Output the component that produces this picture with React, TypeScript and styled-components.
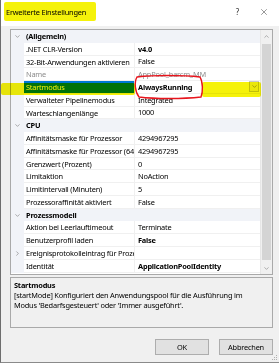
import React from 'react';
import styled, { createGlobalStyle } from 'styled-components';
import { ChevronDown, ChevronRight, ChevronUp, X } from 'lucide-react';

const GlobalStyle = createGlobalStyle`
  html, body {
    margin: 0;
    padding: 0;
    background: #ffffff;
  }
  body {
    font-family: "Noto Sans", "Liberation Sans", sans-serif;
    font-size: 7.4px;
    letter-spacing: -0.2px;
    color: #000;
  }
`;

type Row =
  | { kind: 'cat'; label: string }
  | {
      kind: 'prop';
      name: string;
      value: string;
      bold?: boolean;
      disabled?: boolean;
      selected?: boolean;
      expandable?: boolean;
    };

const rows: Row[] = [
  { kind: 'cat', label: '(Allgemein)' },
  { kind: 'prop', name: '.NET CLR-Version', value: 'v4.0', bold: true },
  { kind: 'prop', name: '32-Bit-Anwendungen aktivieren', value: 'False' },
  { kind: 'prop', name: 'Name', value: 'AppPool_barcm_MM', disabled: true },
  { kind: 'prop', name: 'Startmodus', value: 'AlwaysRunning', bold: true, selected: true },
  { kind: 'prop', name: 'Verwalteter Pipelinemodus', value: 'Integrated' },
  { kind: 'prop', name: 'Warteschlangenlänge', value: '1000' },
  { kind: 'cat', label: 'CPU' },
  { kind: 'prop', name: 'Affinitätsmaske für Prozessor', value: '4294967295' },
  { kind: 'prop', name: 'Affinitätsmaske für Prozessor (64-Bit-Option)', value: '4294967295' },
  { kind: 'prop', name: 'Grenzwert (Prozent)', value: '0' },
  { kind: 'prop', name: 'Limitaktion', value: 'NoAction' },
  { kind: 'prop', name: 'Limitintervall (Minuten)', value: '5' },
  { kind: 'prop', name: 'Prozessoraffinität aktiviert', value: 'False' },
  { kind: 'cat', label: 'Prozessmodell' },
  { kind: 'prop', name: 'Aktion bei Leerlauftimeout', value: 'Terminate' },
  { kind: 'prop', name: 'Benutzerprofil laden', value: 'False', bold: true },
  { kind: 'prop', name: 'Ereignisprotokolleintrag für Prozessmodell', value: '', expandable: true },
  { kind: 'prop', name: 'Identität', value: 'ApplicationPoolIdentity', bold: true },
];

const App: React.FC = () => {
  return (
    <>
      <GlobalStyle />
      <Window>
        <TitleBar>
          <Title>Erweiterte Einstellungen</Title>
          <TitleButtons>
            <TitleGlyph>?</TitleGlyph>
            <X size={10} strokeWidth={1.2} />
          </TitleButtons>
        </TitleBar>

        <Body>
          <Grid>
            <List>
              {rows.map((r, i) =>
                r.kind === 'cat' ? (
                  <CatRow key={i}>
                    <Gutter>
                      <ChevronDown size={7} strokeWidth={1.6} color="#555" />
                    </Gutter>
                    <CatLabel>{r.label}</CatLabel>
                  </CatRow>
                ) : (
                  <PropRow key={i}>
                    <Gutter>
                      {r.expandable && <ChevronRight size={7} strokeWidth={1.6} color="#555" />}
                    </Gutter>
                    <NameCell $selected={r.selected} $disabled={r.disabled}>
                      {r.name}
                    </NameCell>
                    <ValueCell $bold={r.bold} $disabled={r.disabled}>
                      <ValueText>{r.value}</ValueText>
                      {r.selected && (
                        <DropButton>
                          <ChevronDown size={7} strokeWidth={1.4} color="#444" />
                        </DropButton>
                      )}
                    </ValueCell>
                  </PropRow>
                )
              )}
            </List>
            <ScrollBar>
              <ScrollArrow>
                <ChevronUp size={7} strokeWidth={1.6} color="#606060" />
              </ScrollArrow>
              <ScrollTrack>
                <Thumb />
              </ScrollTrack>
              <ScrollArrow>
                <ChevronDown size={7} strokeWidth={1.6} color="#606060" />
              </ScrollArrow>
            </ScrollBar>
          </Grid>

          <Description>
            <DescTitle>Startmodus</DescTitle>
            <DescText>
              [startMode] Konfiguriert den Anwendungspool für die Ausführung im
              <br />
              Modus 'Bedarfsgesteuert' oder 'Immer ausgeführt'.
            </DescText>
          </Description>

          <Footer>
            <DialogButton>OK</DialogButton>
            <DialogButton>Abbrechen</DialogButton>
          </Footer>
        </Body>

        <Marker $x={3} $y={2} $w={92} $h={19} />
        <Marker $x={0} $y={83} $w={134} $h={12} />
        <Marker $x={201} $y={82} $w={59} $h={15} />
        <RedCircle width={72} height={26} viewBox="0 0 72 26">
          <path
            d="M4 3 C20 1 50 1 67 3 C70 8 70 18 68 23 C50 25 22 25 6 23 C2 18 1 8 4 3 Z"
            fill="none"
            stroke="#e8141c"
            strokeWidth={1.4}
          />
        </RedCircle>
        <Grip>
          <svg width={8} height={8} viewBox="0 0 8 8">
            <rect x={6} y={2} width={1} height={1} fill="#b0b0b0" />
            <rect x={4} y={4} width={1} height={1} fill="#b0b0b0" />
            <rect x={6} y={4} width={1} height={1} fill="#b0b0b0" />
            <rect x={2} y={6} width={1} height={1} fill="#b0b0b0" />
            <rect x={4} y={6} width={1} height={1} fill="#b0b0b0" />
            <rect x={6} y={6} width={1} height={1} fill="#b0b0b0" />
          </svg>
        </Grip>
      </Window>
    </>
  );
};

const Window = styled.div`
  position: relative;
  width: 279px;
  height: 363px;
  box-sizing: border-box;
  background: #f0f0f0;
  border-left: 1px solid #6e6e6e;
  border-bottom: 1px solid #8a8a8a;
  display: flex;
  flex-direction: column;
  overflow: hidden;
`;

const TitleBar = styled.div`
  height: 26px;
  background: #ffffff;
  display: flex;
  align-items: center;
  justify-content: space-between;
  padding: 0 10px 0 5px;
  flex-shrink: 0;
`;

const Title = styled.span`
  position: relative;
  z-index: 2;
  margin-top: -2px;
`;

const TitleButtons = styled.div`
  display: flex;
  align-items: center;
  gap: 20px;
  color: #333;
  margin-top: -3px;
`;

const TitleGlyph = styled.span`
  font-size: 8px;
`;

const Body = styled.div`
  display: flex;
  flex-direction: column;
  padding: 3px 6px 0 9px;
`;

const Grid = styled.div`
  display: flex;
  height: 244px;
  border: 1px solid #a9a9a9;
  background: #ffffff;
`;

const List = styled.div`
  width: 249px;
  display: flex;
  flex-direction: column;
`;

const rowBase = `
  height: 12.78px;
  flex-shrink: 0;
  display: grid;
  align-items: stretch;
  line-height: 12px;
  white-space: nowrap;
  overflow: hidden;
`;

const CatRow = styled.div`
  ${rowBase}
  grid-template-columns: 13px 1fr;
  background: #f1f3f8;
`;

const PropRow = styled.div`
  ${rowBase}
  grid-template-columns: 13px 111px 125px;
`;

const Gutter = styled.div`
  background: #f1f3f8;
  display: flex;
  align-items: center;
  justify-content: center;
`;

const CatLabel = styled.div`
  font-weight: 700;
  padding-left: 2px;
`;

const NameCell = styled.div<{ $selected?: boolean; $disabled?: boolean }>`
  padding-left: 2px;
  overflow: hidden;
  border-bottom: 1px solid #f0f0f0;
  border-right: 1px solid #f0f0f0;
  box-sizing: border-box;
  background: ${(p) => (p.$selected ? '#0078d7' : '#ffffff')};
  color: ${(p) => (p.$selected ? '#ffffff' : p.$disabled ? '#8d8d8d' : '#000000')};
`;

const ValueCell = styled.div<{ $bold?: boolean; $disabled?: boolean }>`
  display: flex;
  align-items: center;
  padding-left: 3px;
  box-sizing: border-box;
  border-bottom: 1px solid #f0f0f0;
  font-weight: ${(p) => (p.$bold ? 700 : 400)};
  color: ${(p) => (p.$disabled ? '#8d8d8d' : '#000000')};
  overflow: hidden;
`;

const ValueText = styled.span`
  flex: 1;
`;

const DropButton = styled.div`
  width: 10px;
  height: 11px;
  margin-right: 1px;
  border: 1px solid #c8c8c8;
  box-sizing: border-box;
  background: #f4f4f4;
  display: flex;
  align-items: center;
  justify-content: center;
`;

const ScrollBar = styled.div`
  width: 11px;
  display: flex;
  flex-direction: column;
  background: #f0f0f0;
  border-left: 1px solid #e6e6e6;
`;

const ScrollArrow = styled.div`
  height: 12px;
  display: flex;
  align-items: center;
  justify-content: center;
`;

const ScrollTrack = styled.div`
  flex: 1;
  padding: 2px 1px;
  display: flex;
`;

const Thumb = styled.div`
  flex: 1;
  background: #d4d4d4;
`;

const Description = styled.div`
  margin-top: 2px;
  height: 51px;
  box-sizing: border-box;
  border: 1px solid #a9a9a9;
  background: #f0f0f0;
  padding: 2px 3px;
`;

const DescTitle = styled.div`
  font-weight: 700;
  line-height: 10px;
`;

const DescText = styled.div`
  line-height: 9.5px;
  margin-top: 1px;
`;

const Footer = styled.div`
  display: flex;
  justify-content: flex-end;
  gap: 10px;
  margin-top: 11px;
`;

const DialogButton = styled.button`
  width: 54px;
  height: 16px;
  padding: 0;
  font-family: "Noto Sans", "Liberation Sans", sans-serif;
  font-size: 7.4px;
  letter-spacing: -0.2px;
  color: #000;
  background: #e1e1e1;
  border: 1px solid #adadad;
  border-radius: 0;
`;

const Marker = styled.div<{ $x: number; $y: number; $w: number; $h: number }>`
  position: absolute;
  left: ${(p) => p.$x}px;
  top: ${(p) => p.$y}px;
  width: ${(p) => p.$w}px;
  height: ${(p) => p.$h}px;
  background: #f5f20a;
  mix-blend-mode: multiply;
  border-radius: 2px;
  pointer-events: none;
`;

const RedCircle = styled.svg`
  position: absolute;
  left: 132px;
  top: 74px;
  pointer-events: none;
`;

const Grip = styled.div`
  position: absolute;
  right: 1px;
  bottom: 1px;
  line-height: 0;
`;

export default App;
